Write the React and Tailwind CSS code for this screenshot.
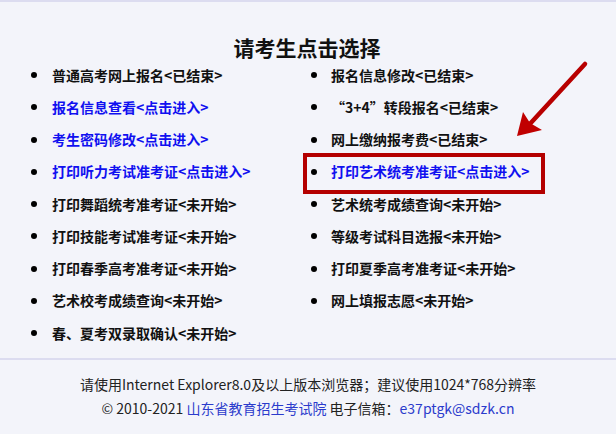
const left = [
  { text: '普通高考网上报名<已结束>' },
  { text: '报名信息查看<点击进入>', link: true },
  { text: '考生密码修改<点击进入>', link: true },
  { text: '打印听力考试准考证<点击进入>', link: true },
  { text: '打印舞蹈统考准考证<未开始>' },
  { text: '打印技能考试准考证<未开始>' },
  { text: '打印春季高考准考证<未开始>' },
  { text: '艺术校考成绩查询<未开始>' },
  { text: '春、夏考双录取确认<未开始>' },
];

const right = [
  { text: '报名信息修改<已结束>' },
  { text: '“3+4”转段报名<已结束>' },
  { text: '网上缴纳报考费<已结束>' },
  { text: '打印艺术统考准考证<点击进入>', link: true, boxed: true },
  { text: '艺术统考成绩查询<未开始>' },
  { text: '等级考试科目选报<未开始>' },
  { text: '打印夏季高考准考证<未开始>' },
  { text: '网上填报志愿<未开始>' },
];

const Item = ({ item, gap }) => (
  <li className="relative flex items-center h-[32.25px]">
    <span className="w-[6px] h-[6px] rounded-full bg-black shrink-0" />
    <span className={`${gap} text-[14px] font-bold whitespace-nowrap ${item.link ? 'text-[#1010f0]' : 'text-[#111]'}`}>
      {item.text}
    </span>
    {item.boxed && (
      <span className="absolute -left-[8px] -top-[3px] w-[242px] h-[41px] border-4 border-[#b40000]" />
    )}
  </li>
);

export default function App() {
  return (
    <div
      className="relative w-full h-[434px] bg-[#f3f4fa] border-t-2 border-[#dcdcf0] overflow-hidden"
      style={{ fontFamily: '"Noto Sans CJK SC", "Noto Sans", sans-serif' }}
    >
      <h1 className="pt-[31px] text-center text-[21px] leading-[28px] font-bold text-[#111] pr-[2px]">
        请考生点击选择
      </h1>

      <div className="grid grid-cols-[280px_1fr] pl-[31px] mt-[-2px]">
        <ul>
          {left.map((item) => (
            <Item key={item.text} item={item} gap="ml-[15px]" />
          ))}
        </ul>
        <ul>
          {right.map((item) => (
            <Item key={item.text} item={item} gap="ml-[14px]" />
          ))}
        </ul>
      </div>

      <div className="mt-[9px] border-t-2 border-[#dcdcf0]" />

      <div className="pt-[12px] text-center text-[14px] leading-[24px] text-[#222]">
        <p>请使用Internet Explorer8.0及以上版本浏览器；建议使用1024*768分辨率</p>
        <p>
          © 2010-2021 <span className="text-[#2b3bcc]">山东省教育招生考试院</span> 电子信箱：
          <span className="text-[#2b3bcc]">e37ptgk@sdzk.cn</span>
        </p>
      </div>

      <svg className="absolute left-0 top-0" width="616" height="434" viewBox="0 0 616 434">
        <line x1="585" y1="62" x2="528" y2="124" stroke="#b80000" strokeWidth="4.5" strokeLinecap="round" />
        <polygon points="517,134 523,110 530,121 542,128" fill="#c00000" />
      </svg>
    </div>
  );
}
